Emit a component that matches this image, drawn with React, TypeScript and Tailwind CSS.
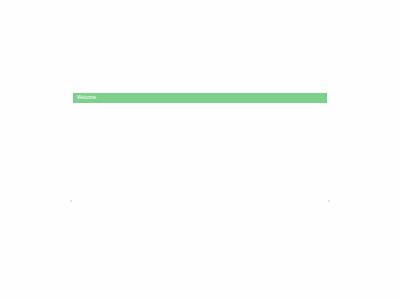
export default function App() {
  return (
    <div
      className="w-[400px] h-[300px] bg-[#fdfefd] flex flex-col px-[70px] pt-[93px]"
      style={{ fontFamily: '"Liberation Sans", Arial, sans-serif' }}
    >
      <div className="mx-[3px] h-[10px] bg-[#7dcf8d] text-white text-[4.6px] leading-[10px] pl-[4px]">
        Welcome
      </div>
      <div className="mt-[97px] flex justify-between items-center">
        <span className="w-[2px] h-[2px] bg-[#e2e5e2]" />
        <span className="w-[2px] h-[2px] bg-[#e2e5e2]" />
      </div>
    </div>
  )
}
